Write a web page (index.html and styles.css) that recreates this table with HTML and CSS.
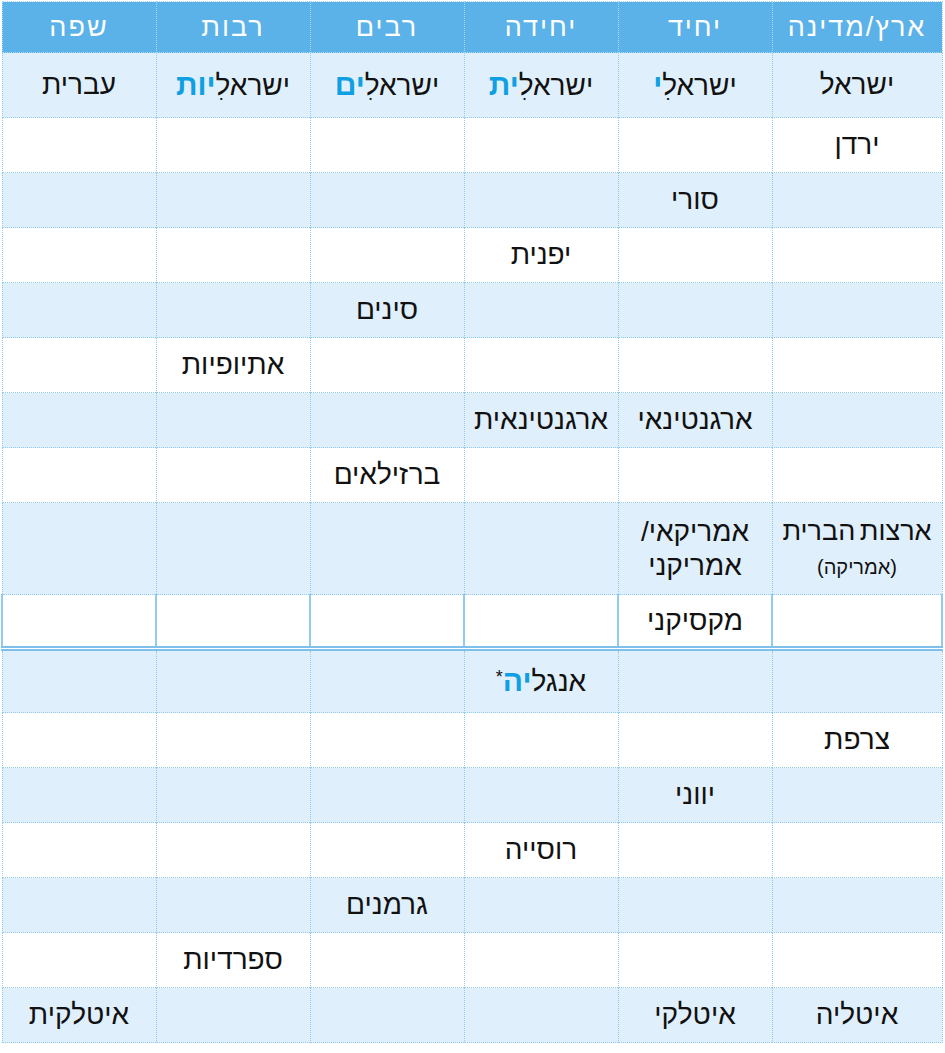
FILE: index.html
```html
<!DOCTYPE html>
<html lang="he" dir="rtl">
<head>
<meta charset="utf-8">
<link rel="stylesheet" href="styles.css">
</head>
<body>
<table class="nat">
  <colgroup>
    <col class="c-wide"><col class="c"><col class="c"><col class="c"><col class="c"><col class="c">
  </colgroup>
  <thead>
    <tr class="head">
      <th>ארץ/מדינה</th><th>יחיד</th><th>יחידה</th><th>רבים</th><th>רבות</th><th>שפה</th>
    </tr>
  </thead>
  <tbody>
    <tr class="lt r-first">
      <td>ישראל</td>
      <td>ישראלִ<b class="hl">י</b></td>
      <td>ישראלִ<b class="hl">ית</b></td>
      <td>ישראלִ<b class="hl">ים</b></td>
      <td>ישראלִ<b class="hl">יות</b></td>
      <td>עברית</td>
    </tr>
    <tr class="wt"><td>ירדן</td><td></td><td></td><td></td><td></td><td></td></tr>
    <tr class="lt"><td></td><td>סורי</td><td></td><td></td><td></td><td></td></tr>
    <tr class="wt"><td></td><td></td><td>יפנית</td><td></td><td></td><td></td></tr>
    <tr class="lt"><td></td><td></td><td></td><td>סינים</td><td></td><td></td></tr>
    <tr class="wt"><td></td><td></td><td></td><td></td><td>אתיופיות</td><td></td></tr>
    <tr class="lt"><td></td><td>ארגנטינאי</td><td>ארגנטינאית</td><td></td><td></td><td></td></tr>
    <tr class="wt"><td></td><td></td><td></td><td>ברזילאים</td><td></td><td></td></tr>
    <tr class="lt r-tall">
      <td><span class="two tight">ארצות הברית<br><small class="sub">(אמריקה)</small></span></td>
      <td><span class="two">אמריקאי/<br>אמריקני</span></td>
      <td></td><td></td><td></td><td></td>
    </tr>
    <tr class="wt r-split"><td></td><td>מקסיקני</td><td></td><td></td><td></td><td></td></tr>
    <tr class="lt r-eng"><td></td><td></td><td>אנגל<b class="hl">יה</b><sup class="ast">*</sup></td><td></td><td></td><td></td></tr>
    <tr class="wt"><td>צרפת</td><td></td><td></td><td></td><td></td><td></td></tr>
    <tr class="lt"><td></td><td>יווני</td><td></td><td></td><td></td><td></td></tr>
    <tr class="wt"><td></td><td></td><td>רוסייה</td><td></td><td></td><td></td></tr>
    <tr class="lt"><td></td><td></td><td></td><td>גרמנים</td><td></td><td></td></tr>
    <tr class="wt"><td></td><td></td><td></td><td></td><td>ספרדיות</td><td></td></tr>
    <tr class="lt"><td>איטליה</td><td>איטלקי</td><td></td><td></td><td></td><td>איטלקית</td></tr>
  </tbody>
</table>
</body>
</html>
```

FILE: styles.css
```css
html, body {
  margin: 0;
  padding: 0;
  background: #ffffff;
}

body {
  padding: 1px 2px 0 1px;
  font-family: "Liberation Sans", Arial, "DejaVu Sans", sans-serif;
}

.nat {
  width: 942px;
  border-collapse: collapse;
  table-layout: fixed;
  direction: rtl;
}

.c-wide { width: 170px; }
.c { width: 154px; }

.nat th,
.nat td {
  padding: 0;
  text-align: center;
  vertical-align: middle;
  border: 1px dotted #93caf0;
  color: #111111;
  font-size: 28px;
  font-weight: normal;
  line-height: 32px;
}

.head th {
  background: #5bb2e8;
  color: #ffffff;
  height: 50px;
  font-size: 27px;
  letter-spacing: 2px;
  border: 1px dotted #a9d6f5;
}

.lt td { background: #e0effc; height: 54px; }
.wt td { background: #ffffff; height: 54px; }

.r-first td { height: 64px; }
.r-tall td { height: 91px; }
.r-eng td { height: 61px; }

.r-split td {
  height: 51px;
  border-left: 2px solid #93caf0;
  border-right: 2px solid #93caf0;
  border-bottom: 5px double #7ebfec;
}

.hl {
  color: #0ea0e2;
  font-weight: bold;
  font-size: 30px;
}

.two {
  display: inline-block;
  line-height: 34px;
}

.tight {
  font-size: 27px;
  word-spacing: -3px;
}

.sub {
  font-size: 20px;
}

.ast {
  font-size: 18px;
  vertical-align: 8px;
  line-height: 0;
}
```
